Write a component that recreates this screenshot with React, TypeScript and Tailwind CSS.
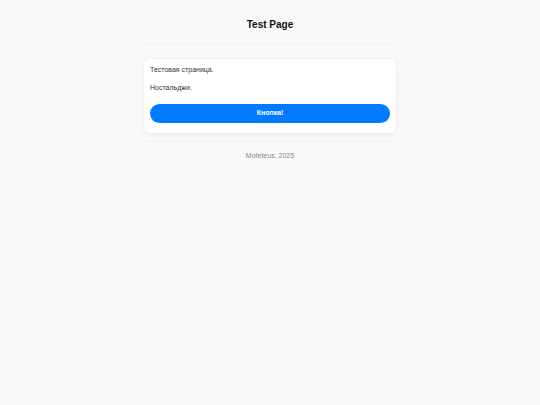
export default function App() {
  return (
    <div className="min-h-[405px] bg-[#f9f9f9] text-[#222]" style={{ fontFamily: '"Liberation Sans", Arial, sans-serif' }}>
      <div className="mx-auto w-[252px]">
        <header className="flex h-[45px] items-start justify-center border-b border-[#f0f0f0] pt-[17px]">
          <h1 className="text-[10px] font-bold leading-[15px] text-[#111]">Test Page</h1>
        </header>
        <main className="pt-[14px] pb-[8px]">
          <div className="rounded-[6px] bg-white px-[6px] pt-[6px] pb-[10px] shadow-[0_1px_4px_rgba(0,0,0,0.08)]">
            <p className="text-[7px] leading-[10px] text-[#333]">Тестовая страница.</p>
            <p className="mt-[8px] text-[7px] leading-[10px] text-[#333]">Ностальджи.</p>
            <button className="mt-[11px] flex h-[19px] w-full items-center justify-center rounded-full bg-[#007aff] text-[7px] font-bold text-white">
              Кнопка!
            </button>
          </div>
        </main>
        <footer className="border-t border-[#f0f0f0] pt-[9px] text-center text-[7px] leading-[10px] text-[#888]">
          Mofeteus, 2025
        </footer>
      </div>
    </div>
  );
}
